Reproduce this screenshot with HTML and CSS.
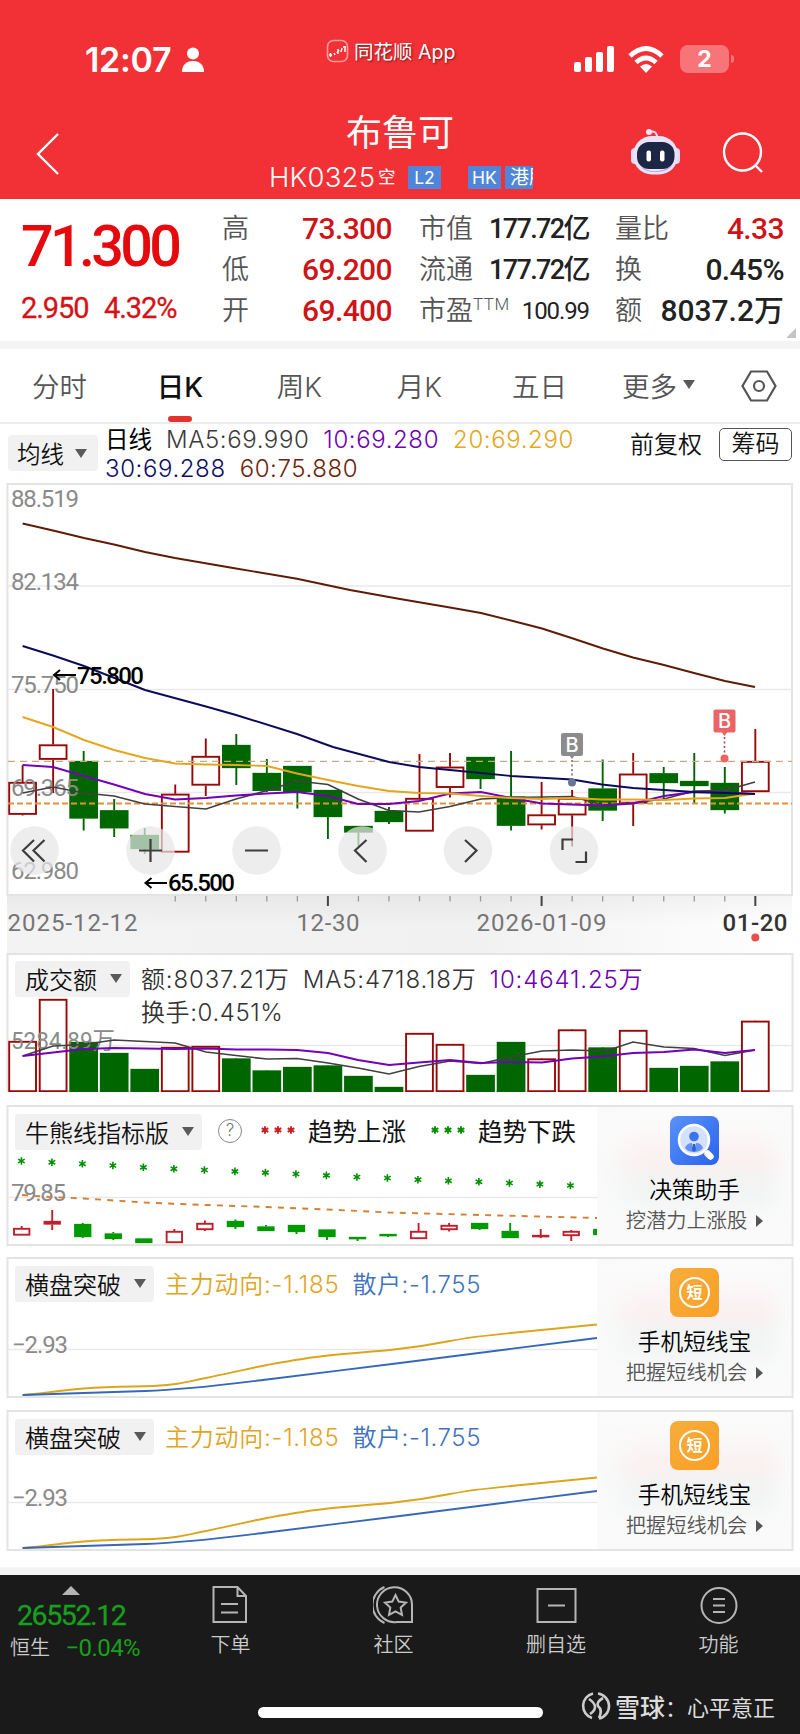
FILE: index.html
```html
<!DOCTYPE html>
<html lang="zh-CN">
<head>
	<meta charset="UTF-8">
	<title>布鲁可 HK0325</title>
	<link rel="stylesheet" href="styles.css">
</head>
<body>
	<div class="header">
		<div class="status">
			<div class="time">12:07</div>
			<svg class="person" width="24" height="26" viewBox="0 0 24 26"><circle cx="12" cy="6.5" r="6"/><path d="M1 25C1 18 5 14 12 14s11 4 11 11z"/></svg>
			<div class="appmark">
				<svg width="24" height="24" viewBox="0 0 24 24"><rect x="1.500" y="1.500" width="20" height="21" rx="6" fill="none" stroke="#ff9c9e" stroke-width="1.600"/><path d="M3 16h3M4.500 14v4M8 14l1 2M11 14l2-3M12 10v5M16 9l-1 4M19 7v6M17 8h3" fill="none" stroke="#fff" stroke-width="1.500"/></svg>
				<span>同花顺 App</span>
			</div>
			<svg class="signal" width="40" height="26" viewBox="0 0 40 26"><rect x="0" y="16" width="7" height="10" rx="2"/><rect x="11" y="11" width="7" height="15" rx="2"/><rect x="22" y="6" width="7" height="20" rx="2"/><rect x="33" y="0" width="7" height="26" rx="2"/></svg>
			<svg class="wifi" width="36" height="27" viewBox="0 0 36 27"><path d="M2 10Q18-5 34 10M8 16.500Q18 7.500 28 16.500" fill="none" stroke="#fff" stroke-width="4.800"/><path d="M12 20.500Q18 15.500 24 20.500L18 27z" fill="#fff"/></svg>
			<div class="battery">2</div>
		</div>
		<div class="titlebar">
			<svg class="back" width="24" height="42" viewBox="0 0 24 42"><path d="M22 1L2 21l20 20"/></svg>
			<div class="title">
				<h1>布鲁可</h1>
				<div class="code"><span>HK0325</span><small>空</small><b>L2</b><b class="hk">HK</b><b class="gang">港股</b></div>
			</div>
			<svg class="robot" width="49" height="46" viewBox="0 0 49 46">
				<path d="M18 3Q26 1 26 8" fill="none" stroke="#f3dbe8" stroke-width="2"/><circle cx="18" cy="3" r="3" fill="#f1e4f2"/>
				<rect x="0" y="19" width="8" height="16" rx="4" fill="#dcd8f5"/><rect x="41" y="19" width="8" height="16" rx="4" fill="#dcd8f5"/>
				<rect x="2" y="7" width="45" height="38.500" rx="19" fill="#e9e3fa"/><path d="M9 37Q24 48 42 36Q36 43 25 43T9 37" fill="#aaa2e6"/>
				<rect x="6" y="13" width="37.500" height="27" rx="12" fill="#1d2645"/>
				<rect x="15.500" y="21.500" width="4.500" height="11" rx="2" fill="#fff"/><rect x="29" y="21.500" width="4.500" height="11" rx="2" fill="#fff"/>
			</svg>
			<svg class="search" width="42" height="42" viewBox="0 0 42 42"><circle cx="20.500" cy="20" r="18.500"/><path d="M33 33l7 7"/></svg>
		</div>
	</div>

	<div class="quote">
		<div class="price">
			<div class="now">71.300</div>
			<div class="change"><span>2.950</span><span>4.32%</span></div>
		</div>
		<dl class="q1">
			<dt>高</dt><dd>73.300</dd>
			<dt>低</dt><dd>69.200</dd>
			<dt>开</dt><dd>69.400</dd>
		</dl>
		<dl class="q2">
			<dt>市值</dt><dd>177.72亿</dd>
			<dt>流通</dt><dd>177.72亿</dd>
			<dt>市盈<sup>TTM</sup></dt><dd class="pe">100.99</dd>
		</dl>
		<dl class="q3">
			<dt>量比</dt><dd class="red">4.33</dd>
			<dt>换</dt><dd>0.45%</dd>
			<dt>额</dt><dd class="amt">8037.2万</dd>
		</dl>
		<i class="corner"></i>
	</div>

	<ul class="tabs">
		<li>分时</li>
		<li class="cur">日K</li>
		<li>周K</li>
		<li>月K</li>
		<li>五日</li>
		<li class="more">更多<i class="arrow"></i></li>
		<li><svg width="36" height="32" viewBox="0 0 36 32"><path d="M10 1.500h16L34.500 16 26 30.500H10L1.500 16z"/><circle cx="18" cy="16" r="5"/></svg></li>
	</ul>

	<div class="mabar">
		<div class="pick">均线<i class="arrow"></i></div>
		<div class="ma">
			<p><span class="c0">日线</span><span class="c5">MA5:69.990</span><span class="c10">10:69.280</span><span class="c20">20:69.290</span></p>
			<p><span class="c30">30:69.288</span><span class="c60">60:75.880</span></p>
		</div>
		<div class="fq">前复权</div>
		<div class="chip">筹码</div>
	</div>

	<svg class="kline" width="800" height="470" viewBox="0 483 800 470">
		<defs>
			<linearGradient id="axisBg" x1="0" y1="0" x2="1" y2="0"><stop offset="0" stop-color="#f3f3f3"/><stop offset=".6" stop-color="#f1f1f1"/><stop offset="1" stop-color="#fff"/></linearGradient>
			<linearGradient id="axisTop" x1="0" y1="0" x2="0" y2="1"><stop offset="0" stop-color="#000" stop-opacity=".04"/><stop offset="1" stop-color="#000" stop-opacity="0"/></linearGradient>
		</defs>
		<rect x="7" y="895" width="785" height="58" fill="url(#axisBg)"/>
		<rect x="7" y="895" width="785" height="30" fill="url(#axisTop)"/>
		<path class="frame" d="M7.500 484H792V895H7.500z"/>
		<path class="grid" d="M8 586H792M8 689.500H792M8 792.500H792"/>
		<g id="ticks"></g>
		<g id="candles"></g>
		<path d="M8 761.300H792" stroke="#c9a984" stroke-width="1.300" stroke-dasharray="7 5"/>
		<path d="M8 803.500H792" stroke="#e0913a" stroke-width="1.800" stroke-dasharray="6 3"/>
		<g class="num axis">
			<text x="11" y="507" textLength="68">88.519</text>
			<text x="11" y="590" textLength="68">82.134</text>
			<text x="11" y="693" textLength="68">75.750</text>
			<text x="11" y="795.500" textLength="68">69.365</text>
			<text x="11" y="879" textLength="68">62.980</text>
		</g>
		<polyline class="l5" points="22.6,793 53,787 84,793 114,796 145,804 175,806.5 206,809 236,799 267,790.5 297,781 328,784.5 358,799 389,810.5 419,812 450,806.500 481,799 511,797.5 542,797 572,796.5 602,805 633,803 664,799 694,791 725,790.5 755,782"/>
		<polyline class="l10" points="22.6,765 53,767 84,776 114,784.5 145,794 175,799.5 206,798 236,795.5 267,793.5 297,792 328,796 358,804 389,804 419,801 450,793.5 481,792 511,798 542,803.5 572,804.5 602,805.5 633,803.5 664,796 694,792 725,792.5 755,794"/>
		<polyline class="l20" points="22.6,717 53,727 84,740 114,750 145,758 175,763.5 206,764.5 236,765 267,766 297,773.5 328,780 358,786 389,791 419,793 450,793.5 481,796 511,798 542,799 572,798 602,799.5 633,799.5 664,800 694,798.5 725,798 755,793.5"/>
		<polyline class="l30" points="22.6,646 53,655.5 84,666 145,690 206,706.5 236,715 297,734 333,747 389,762 419,767 450,770 481,773 511,776 572,779.5 602,784.5 633,788 664,790 694,792 725,793 755,794"/>
		<polyline class="l60" points="22.6,523.5 53,530.5 84,538 114,544.5 145,552 175,558 236,568.500 297,578.7 350,590 400,599 450,607.500 481,613 511,620.500 542,628.500 573,638.500 603,648.500 633,657.500 664,665 694,673 725,681 755,687"/>
		<g class="mark">
			<path d="M76 675H54M60 670l-6 5 6 5"/><text x="77" y="683.500" textLength="67">75.800</text>
			<path d="M167 883H145.500M151.500 878l-6 5 6 5"/><text x="168" y="891" textLength="67">65.500</text>
		</g>
		<g class="flag grey"><rect x="561" y="733" width="22" height="23" rx="2"/><path d="M569 755h6l-3 4z"/><path class="stem" d="M572 760v19"/><circle cx="572" cy="782.500" r="4"/><text x="572" y="751.500">B</text></g>
		<g class="flag"><rect x="713.500" y="709.500" width="22" height="23" rx="2"/><path d="M721.500 732h6l-3 4z"/><path class="stem" d="M724.500 737v18"/><circle cx="724.500" cy="758.500" r="4"/><text x="724.500" y="728">B</text></g>
		<g class="btns">
			<circle cx="34.500" cy="850.500" r="24.300"/><circle cx="150.500" cy="850.500" r="24.300"/><circle cx="256.500" cy="850.500" r="24.300"/><circle cx="362.500" cy="850.500" r="24.300"/><circle cx="468" cy="850.500" r="24.300"/><circle cx="574" cy="850.500" r="24.300"/>
			<path d="M34 840L23 850.500l11 11M44.500 840l-11 10.500 11 11M139 850.500h23M150.500 839v23M245 850.500h23M366.500 840l-11.500 10.500 11.500 11.500M465 840l11.500 10.500-11.500 11.500M573 839.500h-10.500v10.500M575.500 862h10.500v-10.500"/>
		</g>
		<g class="num date">
			<text x="7.500" y="931" textLength="130">2025-12-12</text>
			<text x="296.500" y="931" textLength="63">12-30</text>
			<text x="476.500" y="931" textLength="130">2026-01-09</text>
			<text class="last" x="722.500" y="931" textLength="65">01-20</text>
		</g>
		<circle cx="755.300" cy="937.500" r="4" fill="#e8504f"/>
	</svg>

	<div class="panel vol">
		<svg width="800" height="139" viewBox="0 953 800 139">
			<path class="frame" d="M7.500 954H792.500V1091H7.500z"/>
			<path class="grid" d="M8 1045.500H792"/>
			<g id="volbars"></g>
			<g class="num axis"><text x="11" y="1048.500" textLength="104" lengthAdjust="spacingAndGlyphs">5284.89万</text></g>
			<polyline class="l5" points="22.6,1056 53,1046 84,1044.5 114,1040 145,1041.5 175,1043 206,1052 236,1055.5 267,1059 297,1058.5 328,1063 358,1068 389,1074 419,1066.5 450,1061 481,1063.5 511,1057 542,1051 572,1050 602,1051 615,1048 633,1042 664,1047 694,1048.5 725,1055.5 755,1050"/>
			<polyline class="l10" points="22.6,1056 53,1052.5 84,1049 114,1048 145,1048.5 175,1049 206,1048.5 236,1049.5 267,1049.5 297,1050 328,1053 358,1060 389,1065 419,1062.5 450,1060 481,1063 511,1062 542,1062.5 572,1058.5 602,1056.5 633,1053 664,1052 694,1049.5 725,1053 755,1050"/>
		</svg>
		<div class="phead">
			<div class="pick">成交额<i class="arrow"></i></div>
			<div class="vinfo">
				<p><span>额:8037.21万</span><span>MA5:4718.18万</span><span class="c10">10:4641.25万</span></p>
				<p class="turn">换手:0.451%</p>
			</div>
		</div>
	</div>

	<div class="panel">
		<svg width="800" height="141" viewBox="0 1105 800 141">
			<path class="frame" d="M7.500 1106H792.500V1245H7.500z"/>
			<path class="grid" d="M8 1197.500H597"/>
			<g id="bull"></g>
			<g class="num axis"><text x="11" y="1200.500" textLength="55">79.85</text></g>
			<polyline points="22,1195 50,1197 84,1198.5 114,1200.5 145,1202.5 206,1205 267,1207 328,1209.5 389,1212.5 500,1215.5 597,1218" fill="none" stroke="#d57f35" stroke-dasharray="6 6.200"/>
			<g id="stars"></g>
		</svg>
		<div class="phead">
			<div class="pick">牛熊线指标版<i class="arrow"></i></div>
			<div class="help">?</div>
			<div class="legend"><svg width="34" height="10" viewBox="0 0 34 10" class="st red3"><use href="#star" x="4" y="5"/><use href="#star" x="17" y="5"/><use href="#star" x="30" y="5"/></svg>趋势上涨</div>
			<div class="legend"><svg width="34" height="10" viewBox="0 0 34 10" class="st green3"><use href="#star" x="4" y="5"/><use href="#star" x="17" y="5"/><use href="#star" x="30" y="5"/></svg>趋势下跌</div>
		</div>
		<div class="promo">
			<svg width="49" height="49" viewBox="0 0 49 49">
				<defs><linearGradient id="blue" x1="0" y1="0" x2="1" y2="1"><stop offset="0" stop-color="#5a93f8"/><stop offset="1" stop-color="#2a62ee"/></linearGradient><path id="star" d="M0-3.800V3.800M-3.300-1.900L3.300 1.900M-3.300 1.900L3.300-1.900"/></defs>
				<rect width="49" height="49" rx="8" fill="url(#blue)"/>
				<circle cx="24" cy="24" r="15" fill="#d3e1fd" stroke="#fff" stroke-width="2.500"/><circle cx="24" cy="20.500" r="4.800" fill="#3b72ee"/><path d="M15 32q2-5 7-5l2 9q-6 0-9-4zM33 32q-2-5-7-5l-2 9q6 0 9-4z" fill="#6791f3"/><path d="M23 28h2l1 6-2 2-2-2z" fill="#2c5fd6"/><path d="M37.500 37.500l3 3" stroke="#fff" stroke-width="6.500" stroke-linecap="round"/>
			</svg>
			<b>决策助手</b>
			<span>挖潜力上涨股<i></i></span>
		</div>
	</div>

	<div class="panel">
		<svg width="800" height="141" viewBox="0 1257 800 141">
			<path class="frame" d="M7.500 1258H792.500V1397H7.500z"/>
			<path class="grid" d="M8 1349.500H597"/>
			<g class="num axis"><text x="12" y="1353" textLength="56">−2.93</text></g>
			<g id="breakout">
				<path class="main" d="M22.600 1395C40 1394 62 1390 84 1388.500S114 1387 145 1386.300S185 1382 206 1378S245 1369 267 1365S305 1358 328 1355.500S370 1352 390 1350S430 1345 450 1341S490 1335 511 1333S570 1327 597 1324.500"/>
				<path class="retail" d="M22.600 1395C60 1394 100 1392.500 145 1391S230 1384 267 1379.500S360 1368 400 1363S540 1345 597 1338"/>
			</g>
		</svg>
		<div class="phead">
			<div class="pick">横盘突破<i class="arrow"></i></div>
			<div class="flow"><span class="zl">主力动向:-1.185</span><span class="sh">散户:-1.755</span></div>
		</div>
		<div class="promo">
			<div class="duan"><em>短</em></div>
			<b>手机短线宝</b>
			<span>把握短线机会<i></i></span>
		</div>
	</div>

	<div class="panel">
		<svg width="800" height="141" viewBox="0 1257 800 141">
			<path class="frame" d="M7.500 1258H792.500V1397H7.500z"/>
			<path class="grid" d="M8 1349.500H597"/>
			<g class="num axis"><text x="12" y="1353" textLength="56">−2.93</text></g>
			<use href="#breakout"/>
		</svg>
		<div class="phead">
			<div class="pick">横盘突破<i class="arrow"></i></div>
			<div class="flow"><span class="zl">主力动向:-1.185</span><span class="sh">散户:-1.755</span></div>
		</div>
		<div class="promo">
			<div class="duan"><em>短</em></div>
			<b>手机短线宝</b>
			<span>把握短线机会<i></i></span>
		</div>
	</div>

	<div class="footer">
		<div class="nav">
			<div class="index">
				<i></i>
				<div class="pts">26552.12</div>
				<div class="row"><span>恒生</span><b>−0.04%</b></div>
			</div>
			<div class="item"><svg width="42" height="42" viewBox="0 0 42 42"><path d="M3.500 3h24L36 12v26H3.500zM27.500 3v9H36M11 20h17M11 28.500h17"/></svg>下单</div>
			<div class="item"><svg width="42" height="42" viewBox="0 0 42 42"><path d="M39 21v17H24A17.500 17.500 0 1 1 39 21zM11.500 3a19.500 19.500 0 0 0 0 36M22.500 11l3.200 6.600 7.300 1-5.300 5 1.300 7.200-6.500-3.400-6.500 3.400 1.300-7.200-5.300-5 7.300-1z"/></svg>社区</div>
			<div class="item"><svg width="42" height="42" viewBox="0 0 42 42"><path d="M2.500 5h38v33h-38zM13 21.500h17"/></svg>删自选</div>
			<div class="item"><svg width="42" height="42" viewBox="0 0 42 42"><circle cx="21" cy="21.500" r="17.500"/><path d="M15 15h12M15 21.500h12M15 28h12"/></svg>功能</div>
		</div>
		<div class="bottom">
			<div class="homebar"></div>
			<div class="sign"><svg width="30" height="30" viewBox="0 0 30 30"><path d="M11 27A12.700 12.700 0 0 1 12 2.500M17 2.500A12.700 12.700 0 0 1 18 27.500M8 8q6 4 6 8t-5 7M22 7q-7 4-5 8 5 4 1 12"/></svg><b>雪球</b><span>：心平意正</span></div>
		</div>
	</div>

	<script type="text/javascript">
		var NS = "http://www.w3.org/2000/svg";
		var first = 22.6;	//第一根K线的中心
		var step = 30.53;	//K线间距

		//涨跌, 最高, 实体上, 实体下, 最低
		var kdata = [
			[1,765.3,782,814.7,815.5],[1,689,744.5,759.7,793],[0,751,761,818.5,830.5],[0,799,810.3,828.3,837],[0,828,835,849,854],
			[1,784.5,793.8,852.5,852.5],[1,738.5,756,785.5,796],[0,734,745,768,785],[0,759,773,790.8,792],[0,766,766,792,808.5],
			[0,790,790,817,839],[0,826,826,832.5,846],[0,807,811,822,824],[1,754,798,831.5,831.5],[1,753,766.7,787.8,797.5],
			[0,757,757,779,789],[0,751,796.5,825.7,830.5],[1,782,814.5,825.2,829.5],[1,790,798,815.3,846.5],[0,759.5,788.5,810.5,821],
			[1,753,773.7,803.5,826],[0,767,773.3,783,800],[0,753,781,786,803],[0,767,783,810,813.5],[1,729,761,792,792]
		];
		//成交额柱顶
		var vdata = [1041,999,1042,1053,1069,1047,1046,1058.5,1070.5,1067,1065.5,1076,1087,1033,1044,1075,1042,1058.5,1029.5,1047.5,1030,1068,1066,1061.5,1020.8];
		var bdata = [
			[1,1226,1228,1235.5,1235.5],[1,1210,1221,1224.5,1230],[0,1223,1224,1237,1238],[0,1232,1233.5,1239,1240],[0,1238,1238.5,1243,1243],
			[1,1229,1231,1243,1243],[1,1220.5,1223,1230,1231],[0,1219.5,1221,1227,1229],[0,1225,1226.5,1231,1231],[0,1225,1225,1232,1234],
			[0,1229.5,1229.5,1237,1240],[0,1237,1237,1238,1241],[0,1234,1234,1235,1237],[1,1223,1231,1239,1239],[1,1223,1225,1230,1231.5],
			[0,1223,1223,1229,1230],[0,1223,1231,1238,1238],[1,1229,1235,1236,1238],[1,1230,1231,1236,1241],[0,1229,1229,1235,1235]
		];
		var sdata = [1161,1162.3,1163.8,1165.5,1167.3,1168.8,1170,1171.4,1172.6,1174,1175.4,1177,1178,1179.7,1180.8,1181.8,1183,1184.2,1185.5];

		function draw(id, tag, attrs){
			var el = document.createElementNS(NS, tag);
			for(var k in attrs){
				el.setAttribute(k, attrs[k]);
			}
			document.getElementById(id).appendChild(el);
		}

		//画一根K线，half是实体宽度的一半
		function candle(id, x, d, half){
			var cls = d[0] ? "up" : "down";
			draw(id, "path", {"class": cls, d: "M" + x + " " + d[1] + "V" + d[2] + "M" + x + " " + d[3] + "V" + d[4]});
			var h = Math.max(d[3] - d[2] - 1.6, 0.6);
			draw(id, "rect", {"class": cls, x: x - half + 0.8, y: d[2] + 0.8, width: half * 2 - 1.6, height: h});
		}

		for(var i = 0; i < kdata.length; i++){
			var x = first + i * step;
			candle("candles", x, kdata[i], 14.2);
			candle("volbars", x, [kdata[i][0], 1092, vdata[i], 1092, 1092], 14.2);
			if(i >= 5){
				var long = i == 10 || i == 17 || i == 24;
				draw("ticks", "path", {d: "M" + x + " 896V" + (long ? 906 : 901.5), stroke: long ? "#444" : "#999", "stroke-width": long ? 2 : 1.3});
			}
		}
		for(i = 0; i < bdata.length; i++){
			candle("bull", first - 0.9 + i * step, bdata[i], 8.5);
		}
		for(i = 0; i < sdata.length; i++){
			draw("stars", "use", {href: "#star", x: 21.4 + i * 30.5, y: sdata[i]});
		}
	</script>
</body>
</html>
```
FILE: styles.css
```css
*{
	margin: 0;
	padding: 0;
	box-sizing: border-box;
}
body{
	width: 800px;
	background: #fff;
	font-family: Inter, "Noto Sans CJK SC", sans-serif;
	font-weight: 350;
	color: #333;
}
ul{
	list-style: none;
}
i, em{
	font-style: normal;
}
svg{
	display: block;
	flex: none;
}
.header{
	height: 199px;
	background: #f13136;
	color: #fff;
}
.status{
	display: flex;
	height: 118px;
	padding: 32px 70px 0 85px;
}
.time{
	width: 96px;
	padding-top: 7px;
	font-size: 34px;
	font-weight: 600;
	line-height: 42px;
	letter-spacing: -.3px;
}
.person{
	margin-top: 15px;
	fill: #fff;
}
.appmark{
	display: flex;
	margin: 7px 0 0 121px;
	width: 248px;
	font-size: 19.5px;
	font-weight: 400;
	line-height: 26px;
	text-shadow: 1px 1px 2px rgba(0,0,0,.5);
}
.appmark svg{
	margin-right: 4px;
}
.signal{
	margin-top: 14px;
	fill: #fff;
}
.wifi{
	margin: 14px 0 0 14px;
}
.battery{
	position: relative;
	width: 49px;
	height: 28px;
	margin: 13px 0 0 16px;
	border-radius: 8px;
	background: #f77579;
	font-size: 23px;
	font-weight: 700;
	line-height: 28px;
	text-align: center;
}
.battery:after{
	content: "";
	position: absolute;
	left: 51px;
	top: 10px;
	width: 3px;
	height: 8px;
	border-radius: 0 4px 4px 0;
	background: #f77579;
}
.titlebar{
	display: flex;
	padding-left: 36px;
}
.back{
	margin-top: 15px;
}
.back path, .search{
	fill: none;
	stroke: #fff;
	stroke-width: 2.4;
}
.title{
	width: 542px;
	padding-left: 209px;
}
.title h1{
	padding-left: 77px;
	font-size: 36px;
	font-weight: 400;
	line-height: 30px;
}
.code{
	display: flex;
	align-items: center;
	margin-top: 13px;
	height: 32px;
	line-height: 32px;
}
.code span{
	width: 107px;
	font-size: 27.5px;
	letter-spacing: .2px;
}
.code small{
	width: 32px;
	font-size: 17.5px;
	font-weight: 400;
	padding-left: 2px;
}
.code b{
	width: 33px;
	height: 23px;
	background: #4f86d9;
	font-size: 17.5px;
	font-weight: 400;
	line-height: 23px;
	text-align: center;
}
.code .hk{
	margin: 0 4px 0 27px;
}
.code .gang{
	width: 28px;
	padding-left: 5px;
	overflow: hidden;
	white-space: nowrap;
	font-size: 19px;
	text-align: left;
}
.robot{
	margin: 11px 0 0 29px;
}
.search{
	margin: 14px 0 0 42px;
}
.quote{
	position: relative;
	display: flex;
	height: 150px;
	padding: 9px 15px 0 21px;
	border-bottom: 8px solid #f4f4f4;
	font-family: Roboto, "Noto Sans CJK SC", sans-serif;
}
.price{
	width: 201px;
	color: #e50a0e;
}
.now{
	height: 76px;
	font-size: 57.5px;
	font-weight: 500;
	line-height: 77px;
	letter-spacing: -3.7px;
}
.change{
	display: flex;
	font-size: 29px;
	font-weight: 400;
	line-height: 48px;
	letter-spacing: -1.1px;
	color: #d51317;
	-webkit-text-stroke: .3px;
}
.change span{
	width: 83px;
}
.quote dl{
	display: grid;
	grid-template-columns: 54px minmax(0, 1fr);
	grid-auto-rows: 41px;
	line-height: 43px;
	white-space: nowrap;
}
.quote dt{
	font-size: 27px;
	color: #555;
}
.quote dd{
	font-size: 30px;
	font-weight: 500;
	letter-spacing: -.6px;
	line-height: 42px;
	text-align: right;
	color: #222;
}
.q1{
	width: 170px;
}
.quote .q1 dd, .quote .red{
	color: #cf1418;
}
.q2{
	width: 170px;
	margin-left: 27px;
}
.quote .q2 dd{
	font-size: 27px;
	letter-spacing: -1.6px;
}
.quote .q2 .pe{
	font-size: 24px;
	font-weight: 400;
	letter-spacing: -1.1px;
}
.q2 sup{
	font-size: 17px;
	line-height: 0;
	letter-spacing: .5px;
}
.quote .q3{
	grid-template-columns: 40px minmax(0, 1fr);
	width: 169px;
	margin-left: 26px;
}
.quote .amt{
	letter-spacing: 0;
}
.corner{
	position: absolute;
	right: 4px;
	bottom: 3px;
	border: 5px solid transparent;
	border-right-color: #c4c4c4;
	border-bottom-color: #c4c4c4;
}
.tabs{
	display: grid;
	grid-template-columns: repeat(6, 120px) 78px;
	height: 75px;
	border-bottom: 2px solid #ececec;
}
.tabs li{
	display: flex;
	justify-content: center;
	align-items: center;
	padding: 0 1px 2px 0;
	font-size: 27.5px;
	color: #555;
}
.tabs li:last-child{
	padding: 0;
}
.tabs .cur{
	position: relative;
	padding-right: 0;
	font-weight: 500;
	color: #111;
}
.tabs .cur:after{
	content: "";
	position: absolute;
	left: 48px;
	bottom: 0;
	width: 24px;
	height: 6px;
	border-radius: 3px;
	background: #e4322d;
}
.tabs svg{
	fill: none;
	stroke: #555;
	stroke-width: 2.2;
}
.arrow{
	display: inline-block;
	margin-left: 13px;
	border: 6.5px solid transparent;
	border-top: 9px solid #5a5a5a;
	border-bottom: 0;
}
.tabs .more{
	padding-right: 3px;
}
.more .arrow{
	margin-left: 6px;
}
.mabar{
	display: flex;
	height: 59px;
	padding-left: 8px;
	color: #111;
}
.pick{
	display: flex;
	align-items: center;
	height: 36px;
	padding: 0 8px 1px 10px;
	border-radius: 4px;
	background: #f1f1f1;
	font-size: 24px;
	color: #111;
	white-space: nowrap;
}
.mabar .pick{
	width: 90px;
	margin-top: 11px;
	padding: 0 0 0 9px;
	font-size: 23.5px;
}
.mabar .arrow{
	margin-left: 11px;
}
.ma{
	width: 532px;
	padding: 2px 0 0 7px;
	font-size: 24px;
	line-height: 28.5px;
	letter-spacing: .6px;
	white-space: nowrap;
}
.ma span{
	margin-right: 14px;
}
.ma .c0{
	color: #000;
	font-size: 23.5px;
	font-weight: 400;
	letter-spacing: 0;
}
.c5{
	color: #3c3c3c;
}
.c10{
	color: #7000b0;
}
.c20{
	color: #e3a81c;
}
.c30{
	color: #0d0d66;
}
.c60{
	color: #6e2208;
}
.fq{
	padding-top: 3px;
	font-size: 24px;
	line-height: 36px;
	width: 89px;
}
.chip{
	width: 73px;
	height: 33px;
	margin-top: 4px;
	border: 1.5px solid #555;
	border-radius: 5px;
	font-size: 24px;
	line-height: 29px;
	text-align: center;
}
.frame{
	fill: none;
	stroke: #e4e4e4;
	stroke-width: 2;
}
.grid{
	fill: none;
	stroke: #e9e9e9;
	stroke-width: 1.3;
}
.num text, .mark text{
	font-family: Roboto, "Noto Sans CJK SC", sans-serif;
	font-size: 24px;
}
.axis{
	fill: #8a8a8a;
	font-weight: 400;
}
.date{
	fill: #757575;
	font-weight: 400;
}
.date .last{
	fill: #333;
	font-weight: 500;
}
.mark text{
	fill: #000;
	font-weight: 500;
}
.mark path{
	fill: none;
	stroke: #000;
	stroke-width: 2;
}
.up{
	fill: none;
	stroke: #990808;
	stroke-width: 1.9;
}
.down{
	fill: #006600;
	stroke: #006600;
	stroke-width: 1.9;
}
#bull .up{
	stroke: #c21f2b;
}
#bull .down{
	fill: #009a00;
	stroke: #009a00;
}
#candles .up, #volbars .up{
	fill: #fff;
}
polyline{
	fill: none;
	stroke-width: 1.9;
}
.l5{
	stroke: #404040;
	stroke-width: 1.7;
}
.l10{
	stroke: #7400b8;
}
.l20{
	stroke: #e6a61c;
}
.l30{
	stroke: #0b0b5c;
}
.l60{
	stroke: #5e1c06;
}
.main, .retail{
	fill: none;
	stroke: #dba51c;
	stroke-width: 1.9;
}
.retail{
	stroke: #3767b8;
}
.flag{
	fill: #ea6466;
}
.flag text{
	fill: #fff;
	font-size: 20px;
	font-weight: 500;
	text-anchor: middle;
}
.flag.grey{
	fill: #8c8c8c;
}
.flag .stem{
	stroke: #a0504f;
	stroke-width: 1.6;
	stroke-dasharray: 2 2.5;
}
.flag.grey .stem{
	stroke: #777;
}
.flag.grey circle{
	fill: #6b7392;
}
.btns circle{
	fill: #e6e6e6;
	opacity: .72;
}
.btns path{
	fill: none;
	stroke: #3d3d3d;
	stroke-width: 2.2;
}
#stars{
	stroke: #009000;
	stroke-width: 1.6;
}
.panel{
	display: grid;
	grid-template-columns: 597px 195px 8px;
	height: 141px;
	margin-bottom: 11.4px;
}
.panel > svg{
	grid-area: 1 / 1 / 2 / 4;
}
.vol{
	height: 139px;
	margin-bottom: 13px;
}
.phead{
	grid-area: 1 / 1;
	display: flex;
	align-items: flex-start;
	padding: 9px 0 0 15px;
	white-space: nowrap;
}
.vol .phead{
	padding-top: 8px;
}
.vinfo{
	padding: 2px 0 0 11px;
	font-size: 24px;
	line-height: 33px;
	letter-spacing: .85px;
}
.vinfo span{
	margin-right: 13px;
}
.turn{
	letter-spacing: .6px;
}
.help{
	flex: none;
	width: 24px;
	height: 24px;
	margin: 5px 19px 0 16px;
	border: 1.5px solid #888;
	border-radius: 50%;
	font-size: 17px;
	line-height: 21px;
	text-align: center;
	color: #777;
}
.legend{
	display: flex;
	align-items: center;
	height: 32px;
	margin-right: 25px;
	font-size: 24.5px;
	font-weight: 400;
	color: #111;
}
.st{
	margin-right: 13px;
	stroke-width: 1.9;
}
.red3{
	stroke: #cc1f1f;
}
.green3{
	stroke: #009000;
}
.flow{
	padding-left: 11px;
	font-size: 24px;
	line-height: 38px;
	letter-spacing: .75px;
}
.zl{
	margin-right: 13px;
	color: #dfa51f;
}
.sh{
	letter-spacing: .6px;
	color: #3f72c0;
}
.promo{
	grid-area: 1 / 2;
	display: flex;
	flex-direction: column;
	align-items: center;
	margin: 2px 1px 2px 0;
	padding: 9px 0 0 1px;
	background: linear-gradient(90deg, #fafafa, rgba(250,250,250,0) 25%, rgba(250,250,250,0) 85%, #fafafa), linear-gradient(#fbfbfb 8%, #faf0f0 40%, #f3f3f3 52%, #f1f5f4 62%, #fafafa 85%);
}
.promo b{
	margin-top: 8px;
	font-size: 22.7px;
	font-weight: 350;
	line-height: 34px;
	color: #000;
}
.promo span{
	display: flex;
	align-items: center;
	font-size: 20.3px;
	line-height: 28px;
	color: #555;
}
.promo span i{
	margin-left: 9px;
	border: 6px solid transparent;
	border-left: 7px solid #555;
	border-right: 0;
}
.duan{
	display: flex;
	justify-content: center;
	align-items: center;
	width: 49px;
	height: 49px;
	border-radius: 8px;
	background: linear-gradient(135deg, #f6ad3c, #fb9f25);
}
.duan em{
	width: 31px;
	height: 31px;
	border: 2px solid #fff;
	border-radius: 50%;
	font-size: 16px;
	font-weight: 700;
	line-height: 26px;
	text-align: center;
	color: #fff;
}
.footer{
	height: 167px;
	margin-top: 16px;
	border-top: 8px solid #f4f4f4;
	background: #1a1a1a;
	color: #ccc;
}
.nav{
	display: grid;
	grid-template-columns: 149px 163px 163px 162px 163px;
	height: 110px;
}
.index{
	padding: 11px 0 0 10px;
	font-family: Roboto, "Noto Sans CJK SC", sans-serif;
}
.index > i{
	display: block;
	width: 0;
	margin-left: 52px;
	border: 9px solid transparent;
	border-bottom: 9px solid #b5b5b5;
	border-top: 0;
}
.pts{
	padding: 2px 0 0 7px;
	font-size: 28.5px;
	font-weight: 400;
	line-height: 38px;
	letter-spacing: -1.4px;
	color: #16a01c;
	-webkit-text-stroke: .3px;
}
.row{
	display: flex;
	justify-content: space-between;
	width: 130px;
	line-height: 26px;
	font-size: 20px;
}
.row b{
	font-size: 24px;
	font-weight: 400;
	letter-spacing: -.6px;
	color: #16a01c;
}
.item{
	display: flex;
	flex-direction: column;
	align-items: center;
	padding-top: 9px;
	font-size: 20px;
	line-height: 38px;
}
.item svg{
	fill: none;
	stroke: #b5b5b5;
	stroke-width: 2;
}
.bottom{
	display: flex;
	padding-left: 258px;
}
.homebar{
	width: 285px;
	height: 11px;
	margin-top: 22px;
	border-radius: 6px;
	background: #fff;
}
.sign{
	display: flex;
	align-items: center;
	height: 34px;
	margin: 4px 0 0 38px;
	font-size: 22px;
	font-weight: 400;
	color: #ddd;
	white-space: nowrap;
}
.sign svg{
	margin-right: 4px;
	fill: none;
	stroke: #ccc;
	stroke-width: 2.6;
}
.sign b{
	font-size: 25px;
	font-weight: 500;
}
```
